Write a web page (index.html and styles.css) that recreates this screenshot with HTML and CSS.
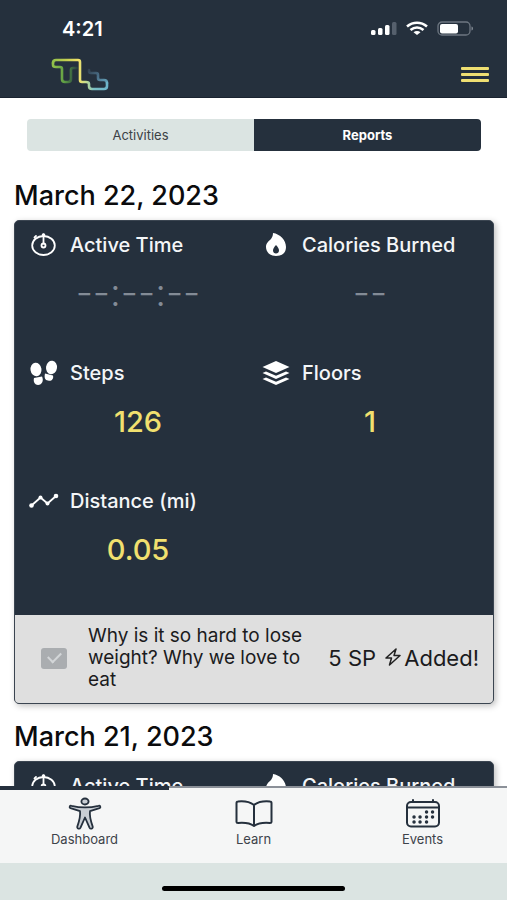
FILE: index.html
```html
<!DOCTYPE html>
<html lang="en">
<head>
<meta charset="utf-8">
<meta name="viewport" content="width=device-width, initial-scale=1">
<title>Reports</title>
<link rel="stylesheet" href="styles.css">
</head>
<body>
<svg class="defs" width="0" height="0" aria-hidden="true">
  <symbol id="timer" viewBox="0 0 30 26">
    <g fill="none" stroke="#fff" stroke-width="1.800" stroke-linecap="round">
      <ellipse cx="14.500" cy="13.500" rx="11.300" ry="9.500"/>
      <path d="M14.500 2.500v9M5.500 5.500 7 4"/>
      <circle cx="14.500" cy="13.500" r="2"/>
    </g>
    <circle cx="14.500" cy="3" r="1.800" fill="#fff"/>
  </symbol>
  <symbol id="flame" viewBox="0 0 30 26">
    <path fill="#fff" fill-rule="evenodd" d="M12 1c7 1 13 7 13 14 0 6-4 9-10 9-6 0-10-4-10-9 0-4 3-6 5-8 1-2 2-3 2-6zM15 13c-2 2-3 4-3 5.500 0 2 1.400 3 3 3s3-1 3-3c0-1.500-1-3.500-3-5.500z"/>
  </symbol>
</svg>
<div class="app">
  <header class="header">
    <div class="status">
      <span class="clock">4:21</span>
      <svg class="signals" width="102" height="16" viewBox="0 0 102 16" aria-hidden="true">
        <g fill="#fff"><rect y="9" width="4.500" height="5" rx="1.500"/><rect x="7" y="7" width="4.500" height="7" rx="1.500"/><rect x="14" y="4" width="4.500" height="10" rx="1.500"/></g>
        <rect x="21" y="1" width="4.500" height="13" rx="1.500" fill="#56606d"/>
        <g fill="none" stroke="#fff" stroke-width="2.600"><path d="M36 5.500c6-5 14-5 20 0M39.500 9c4-3.300 9-3.300 13 0"/></g>
        <path fill="#fff" d="M42.500 11.300c2-1.800 5-1.800 7 0L46 14z"/>
        <rect x="67" y="1" width="32" height="13" rx="4" fill="none" stroke="#6d7681" stroke-width="1.300"/>
        <rect x="69" y="3" width="18" height="9.500" rx="2" fill="#fff"/>
        <path fill="#7f8791" d="M100.500 5.500c2 .5 2 3.500 0 4z"/>
      </svg>
    </div>
    <div class="brand">
      <a href="#" aria-label="Home">
        <svg class="logo" width="60" height="36" viewBox="0 0 60 36" aria-hidden="true">
          <defs>
            <linearGradient id="g1" gradientUnits="userSpaceOnUse" x1="2" y1="0" x2="58" y2="0">
              <stop offset="0" stop-color="#8fbf4a"/><stop offset=".25" stop-color="#c3cf50"/><stop offset=".48" stop-color="#f3e26a"/><stop offset=".6" stop-color="#c6dc8c"/><stop offset=".75" stop-color="#79bfc4"/><stop offset="1" stop-color="#6db4cb"/>
            </linearGradient>
            <linearGradient id="g2" gradientUnits="userSpaceOnUse" x1="3" y1="10" x2="28" y2="12">
              <stop offset="0" stop-color="#8fbf4a"/><stop offset=".5" stop-color="#5f9e44"/><stop offset=".75" stop-color="#3f6b42"/><stop offset="1" stop-color="#283840"/>
            </linearGradient>
            <linearGradient id="g3" gradientUnits="userSpaceOnUse" x1="38" y1="12" x2="58" y2="30">
              <stop offset="0" stop-color="#2f3b49"/><stop offset=".5" stop-color="#4b7089"/><stop offset="1" stop-color="#6db4cb"/>
            </linearGradient>
          </defs>
          <g fill="none" stroke-width="2.600" stroke-linejoin="round" stroke-linecap="round">
            <path stroke="url(#g3)" d="M39 14v1q0 2 2 2h5q2 0 2 2v3q0 2 2 2h4q3 0 3 3"/>
            <path stroke="url(#g2)" d="M3 7v2q0 2 3 2h4q2 0 2 2v10q0 3 3 3h3q3 0 3-3V14q0-2 2-2h4"/>
            <path stroke="url(#g1)" d="M3 7q0-3 3-3h22q2 0 2 2v18q0 2 2 2h4q3 0 3 2v2q0 3 3 3h12q3 0 3-3v-3"/>
          </g>
        </svg>
      </a>
      <button class="menu" type="button" aria-label="Menu"><span></span><span></span><span></span></button>
    </div>
  </header>

  <main class="content">
    <div class="tabs">
      <button type="button" class="tab">Activities</button>
      <button type="button" class="tab tab-active">Reports</button>
    </div>

    <h2 class="date">March 22, 2023</h2>
    <section class="card">
      <div class="stats">
        <div class="stat">
          <h3 class="stat-title"><svg class="icon" aria-hidden="true"><use href="#timer"/></svg>Active Time</h3>
          <p class="value value-empty">--:--:--</p>
        </div>
        <div class="stat">
          <h3 class="stat-title"><svg class="icon" aria-hidden="true"><use href="#flame"/></svg>Calories Burned</h3>
          <p class="value value-empty">--</p>
        </div>
        <div class="stat">
          <h3 class="stat-title"><svg class="icon" viewBox="0 0 30 26" aria-hidden="true"><g fill="#fff"><ellipse cx="7" cy="9.500" rx="5.500" ry="6.800" transform="rotate(-8 7 9.500)"/><path d="M5 18l8-1.500c2 4 0 8.500-4 8.500-3 0-5-3-4-7z"/><ellipse cx="22.500" cy="7.500" rx="5.500" ry="6.800" transform="rotate(8 22.500 7.500)"/><path d="M16 13.500l8 2c1 4-2 6-5 5-3 0-4-3-3-7z"/></g></svg>Steps</h3>
          <p class="value">126</p>
        </div>
        <div class="stat">
          <h3 class="stat-title"><svg class="icon" viewBox="0 0 30 26" aria-hidden="true"><g fill="#fff"><path d="M15 1 28.500 7 15 13 1.500 7z"/><path d="M1.500 13l3.500-1.500 10 4.300 10-4.300 3.500 1.500L15 19z"/><path d="M1.500 19 5 17.500l10 4.300 10-4.300 3.500 1.500L15 25z"/></g></svg>Floors</h3>
          <p class="value">1</p>
        </div>
        <div class="stat">
          <h3 class="stat-title"><svg class="icon" viewBox="0 0 30 26" aria-hidden="true"><path d="M2.500 17.500 11.500 9.500 18.500 15.500 27 8" fill="none" stroke="#fff" stroke-width="1.800"/><g fill="#fff"><circle cx="2.500" cy="17.500" r="2.300"/><circle cx="11.500" cy="9.500" r="2"/><circle cx="18.500" cy="15.500" r="2"/><circle cx="27" cy="8" r="2.300"/></g></svg>Distance (mi)</h3>
          <p class="value">0.05</p>
        </div>
      </div>
      <div class="task">
        <input class="check" type="checkbox" id="lesson" checked disabled>
        <label class="task-name" for="lesson">Why is it so hard to lose weight? Why we love to eat</label>
        <span class="points">5 SP <svg width="16" height="20" viewBox="0 0 16 20" aria-hidden="true"><path d="M11 1 1 10h5.500L4.500 17 15 7.500H9z" fill="none" stroke="#222" stroke-width="1.500" stroke-linejoin="round"/></svg>Added!</span>
      </div>
    </section>

    <h2 class="date">March 21, 2023</h2>
    <section class="card">
      <div class="stats">
        <div class="stat">
          <h3 class="stat-title"><svg class="icon" aria-hidden="true"><use href="#timer"/></svg>Active Time</h3>
        </div>
        <div class="stat">
          <h3 class="stat-title"><svg class="icon" aria-hidden="true"><use href="#flame"/></svg>Calories Burned</h3>
        </div>
      </div>
    </section>
  </main>

  <nav class="nav">
    <a class="nav-item nav-current" href="#">
      <svg width="34" height="34" viewBox="0 0 34 34" aria-hidden="true"><g fill="#c9ced4" stroke="#25303d" stroke-width="1.800" stroke-linejoin="round"><ellipse cx="17" cy="4.500" rx="3.600" ry="3"/><path d="M3.500 8.800c-1.800-.5-2.600 1.600-1 2.300l9.500 3c.8 5-.8 10-2.700 15.500-.6 2 2.300 2.800 3.200 1L17 20.500l4.500 10.100c.9 1.800 3.800 1 3.200-1C22.800 24.100 21.200 19.100 22 14.100l9.500-3c1.600-.7.800-2.800-1-2.300-9 2.200-18 2.200-27 0z"/></g></svg>
      <span>Dashboard</span>
    </a>
    <a class="nav-item" href="#">
      <svg width="40" height="34" viewBox="0 0 40 34" aria-hidden="true"><path d="M20 8C16 5 9 4 4 4.500q-1.500 0-1.500 1.500v19q0 1 1.500 1c6-.5 12 0 16 3 4-3 10-3.500 16-3 1.500 0 1.500 0 1.500-1V6q0-1.500-1.500-1.500C31 4 24 5 20 8zv21" fill="none" stroke="#25303d" stroke-width="2" stroke-linejoin="round"/></svg>
      <span>Learn</span>
    </a>
    <a class="nav-item" href="#">
      <svg width="36" height="34" viewBox="0 0 36 34" aria-hidden="true"><g fill="none" stroke="#25303d" stroke-width="2" stroke-linecap="round"><rect x="2" y="5" width="32" height="24.500" rx="4"/><path d="M2 10.500h32M8 3v2M28 3v2"/></g><path d="M21.500 15h.1M27.500 15h.1M9 20h.1M15 20h.1M21.500 20h.1M27.500 20h.1M9 25h.1M15 25h.1M21.500 25h.1" stroke="#25303d" stroke-width="3.400" stroke-linecap="round"/></svg>
      <span>Events</span>
    </a>
  </nav>
  <div class="home"><div class="home-bar"></div></div>
</div>
</body>
</html>
```
FILE: styles.css
```css
* { box-sizing: border-box; }
body {
  margin: 0;
  background: #fff;
  color: #0b0b0d;
  font-family: Inter, "Liberation Sans", sans-serif;
}
h2, h3, p { margin: 0; }
button { border: 0; padding: 0; font: inherit; }
.defs { position: absolute; }
.app { display: flex; flex-direction: column; height: 100vh; overflow: hidden; }

.header { flex: none; background: #25303d; color: #fff; border-bottom: 1px solid #1a2330; }
.status { display: flex; justify-content: space-between; align-items: center; padding: 16px 34px 0 62px; }
.clock { font-size: 20px; font-weight: 600; line-height: 26px; }
.signals { display: block; }
.brand { display: flex; justify-content: space-between; align-items: center; padding: 14px 18px 5px 50px; }
.logo { display: block; }
.menu { display: flex; flex-direction: column; gap: 3px; background: none; }
.menu span { width: 28px; height: 3px; border-radius: 1px; background: #efdf72; }

.content { flex: 1; min-height: 0; overflow: hidden; padding: 21px 13px 0 14px; }
.tabs { display: flex; margin: 0 13px 27px; border-radius: 4px; overflow: hidden; }
.tab { flex: 1; background: #dbe4e2; color: #3c4246; font-size: 13px; line-height: 32px; }
.tab-active { background: #25303d; color: #fff; font-weight: 700; }

.date { font-size: 27px; font-weight: 500; line-height: 36px; margin-bottom: 6px; }
.card {
  margin-bottom: 15px;
  border: 1px solid #3b4551;
  border-radius: 5px;
  overflow: hidden;
  background: #25303d;
  box-shadow: 2px 2px 6px rgba(0, 0, 0, .25);
}
.stats { display: grid; grid-template-columns: 1fr 1fr; padding: 0 14px 10px 0; }
.stat { min-height: 128px; padding-left: 14px; }
.stat-title {
  display: flex;
  align-items: center;
  gap: 11px;
  color: #f4f6f8;
  font-size: 20px;
  font-weight: 500;
  line-height: 48px;
  white-space: nowrap;
}
.icon { flex: none; width: 30px; height: 26px; }
.value { color: #f1e06f; font-size: 29px; font-weight: 500; line-height: 50px; text-align: center; }
.value-empty { color: #838b96; font-size: 38px; font-weight: 300; line-height: 46px; }

.task { display: flex; align-items: center; padding: 10px 14px 12px 26px; background: #dfdfdf; }
.check {
  appearance: none;
  display: grid;
  place-items: center;
  flex: none;
  width: 26px;
  height: 21px;
  margin: 0;
  border-radius: 3px;
  background: #aaadb0;
}
.check::before {
  content: "";
  width: 11px;
  height: 6px;
  margin-bottom: 4px;
  border: solid #d3d6d8;
  border-width: 0 0 2px 2px;
  transform: rotate(-45deg);
}
.task-name { flex: 1; margin: 0 12px 0 21px; font-size: 19px; line-height: 22px; color: #1b1b1d; }
.points { flex: none; display: flex; align-items: center; gap: 3px; font-size: 22px; line-height: 24px; color: #1b1b1d; white-space: pre; }

.nav { flex: none; display: flex; background: #f5f6f6; border-top: 2px solid #8b9098; }
.nav-item {
  flex: 1;
  display: flex;
  flex-direction: column;
  align-items: center;
  padding: 9px 0 15px;
  color: #3d434a;
  font-size: 13px;
  line-height: 17px;
  text-decoration: none;
}
.nav-current { margin-top: -2px; padding-top: 7px; border-top: 4px solid #25303d; }
.home { flex: none; display: flex; justify-content: center; padding: 23px 0 9px; background: #dbe4e2; }
.home-bar { width: 36%; height: 5px; border-radius: 3px; background: #000; }
```
